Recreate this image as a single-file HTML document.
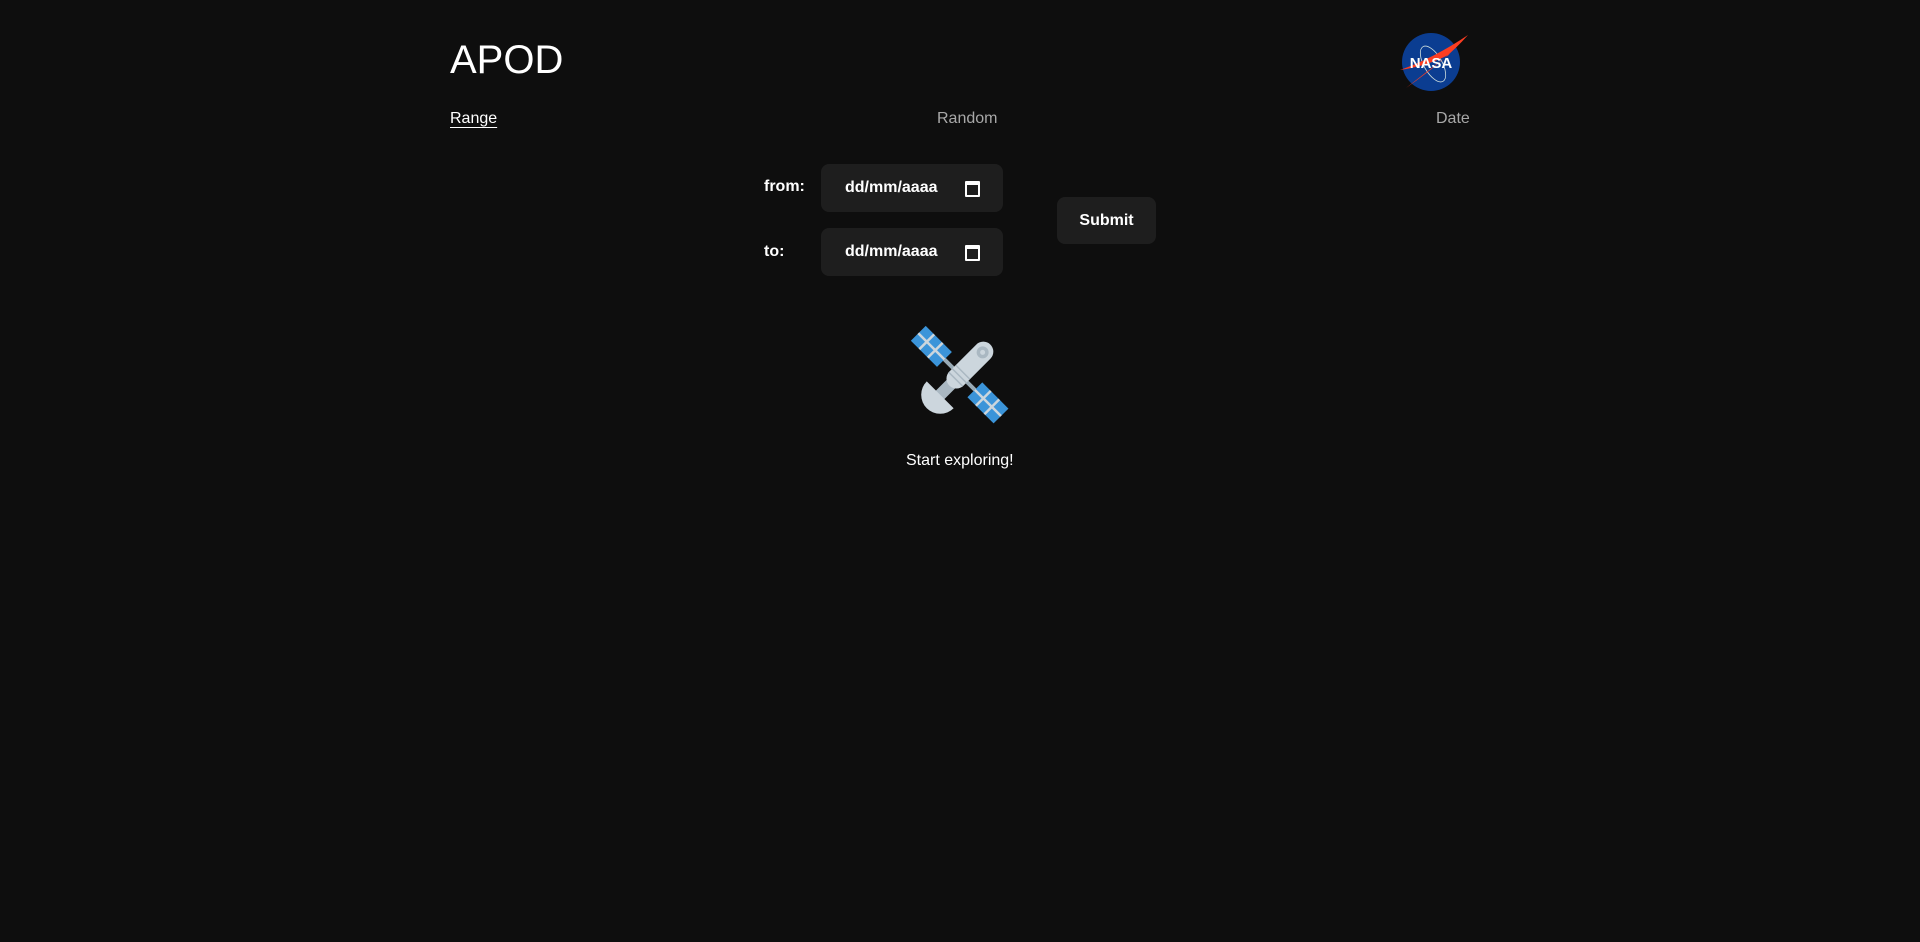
<!DOCTYPE html>
<html><head><meta charset="utf-8"><style>
html,body{margin:0;background:#0e0e0e;width:1920px;height:942px;overflow:hidden;font-family:"Liberation Sans",Arial,sans-serif;color:#fff}
.abs{position:absolute}
.title{left:450px;top:36px;font-size:40px;line-height:48px}
.nav{top:109px;font-size:16px;line-height:20px;color:#a8a8a8}
.lbl{font-weight:bold;font-size:16px;left:764px}
.inp{background:#1e1e1e;border-radius:8px;left:821px;width:182px;height:48px;font-weight:bold;font-size:16px}
.inp span{position:absolute;left:24px;top:15px;line-height:18px}
.cal{position:absolute;left:144px;top:17px;width:11px;height:10px;border:2px solid #fff;border-top-width:4px;border-radius:1px}
</style></head><body>
<div class="abs title">APOD</div>
<svg class="abs" style="left:1398px;top:30px" width="72" height="64" viewBox="0 0 72 64">
<circle cx="33" cy="32" r="29" fill="#0b3d91"/>
<ellipse cx="35" cy="34" rx="9" ry="20" transform="rotate(-30 35 34)" fill="none" stroke="#cdd" stroke-width="0.8"/>
<path d="M2 40 Q36 28 70 5 Q48 30 8 58 Q36 36 52 24 Q30 36 2 40Z" fill="#fc3d21"/>
<text x="33" y="38" text-anchor="middle" font-family="Liberation Sans" font-weight="bold" font-size="15" fill="#fff">NASA</text>
</svg>
<div class="abs nav" style="left:450px;color:#fff;text-decoration:underline;text-underline-offset:4px">Range</div>
<div class="abs nav" style="left:937px">Random</div>
<div class="abs nav" style="left:1436px">Date</div>
<div class="abs lbl" style="top:178px">from:</div>
<div class="abs lbl" style="top:243px">to:</div>
<div class="abs inp" style="top:164px"><span>dd/mm/aaaa</span><div class="cal"></div></div>
<div class="abs inp" style="top:228px"><span>dd/mm/aaaa</span><div class="cal"></div></div>
<div class="abs" style="left:1057px;top:197px;width:99px;height:47px;background:#1e1e1e;border-radius:8px;font-weight:bold;font-size:16px;line-height:47px;text-align:center">Submit</div>
<svg class="abs" style="left:910px;top:325px;overflow:visible" width="100" height="100" viewBox="0 0 100 100">
<g transform="rotate(-45 50 50)">
<rect x="48" y="25" width="4" height="48" fill="#99aab5"/>
<rect x="39.5" y="-9" width="21" height="37" fill="#3b94d9"/>
<rect x="39.5" y="71" width="21" height="37" fill="#3b94d9"/>
<path d="M39.5 3h21M39.5 15h21M50 -9v37M39.5 83h21M39.5 95h21M50 71v37" stroke="#ccd6dd" stroke-width="2.5"/>
<rect x="18" y="44" width="20" height="12" fill="#aab8c2"/>
<rect x="35" y="40" width="58" height="20" rx="10" fill="#ccd6dd"/>
<path d="M44 40v20M49 40v20M54 40v20" stroke="#aab8c2" stroke-width="1.5"/>
<circle cx="82" cy="50" r="6" fill="#aab8c2"/>
<circle cx="82" cy="50" r="2.5" fill="#ccd6dd"/>
<path d="M22 31 A19 19 0 0 0 22 69Z" fill="#ccd6dd"/>
</g></svg>
<div class="abs" style="left:906px;top:451px;font-size:16px;line-height:20px">Start exploring!</div>
</body></html>
